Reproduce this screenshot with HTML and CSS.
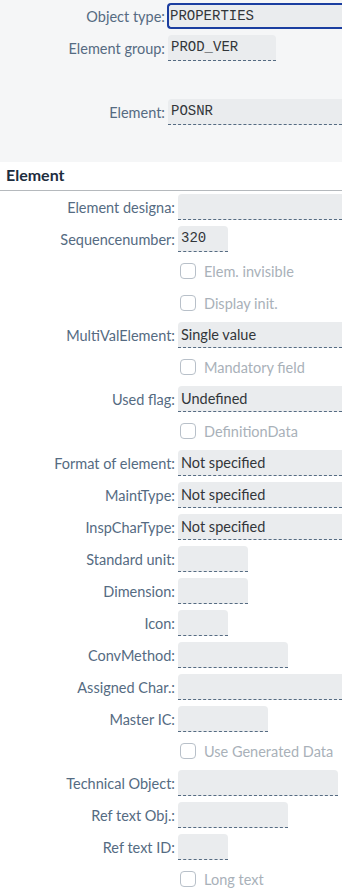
FILE: index.html
```html
<!DOCTYPE html>
<html lang="en">
<head>
  <meta charset="UTF-8" />
  <meta name="viewport" content="width=device-width, initial-scale=1.0"/>
  <title>Element</title>
  <link rel="stylesheet" href="styles.css">
</head>
<body>

  <div class="header-area">
    <div class="row">
      <label>Object type:</label>
      <div class="field full focused mono">PROPERTIES</div>
    </div>
    <div class="row">
      <label>Element group:</label>
      <div class="field w108 mono">PROD_VER</div>
    </div>
    <div class="row"></div>
    <div class="row">
      <label>Element:</label>
      <div class="field full mono">POSNR</div>
    </div>
    <div class="row"></div>
  </div>

  <h2 class="section-title">Element</h2>

  <div class="form">
    <div class="row">
      <label>Element designa:</label>
      <div class="field full"></div>
    </div>
    <div class="row">
      <label>Sequencenumber:</label>
      <div class="field w50 mono">320</div>
    </div>
    <div class="row">
      <label></label>
      <div class="check"><span class="box"></span>Elem. invisible</div>
    </div>
    <div class="row">
      <label></label>
      <div class="check"><span class="box"></span>Display init.</div>
    </div>
    <div class="row">
      <label>MultiValElement:</label>
      <div class="field full">Single value</div>
    </div>
    <div class="row">
      <label></label>
      <div class="check"><span class="box"></span>Mandatory field</div>
    </div>
    <div class="row">
      <label>Used flag:</label>
      <div class="field full">Undefined</div>
    </div>
    <div class="row">
      <label></label>
      <div class="check"><span class="box"></span>DefinitionData</div>
    </div>
    <div class="row">
      <label>Format of element:</label>
      <div class="field full">Not specified</div>
    </div>
    <div class="row">
      <label>MaintType:</label>
      <div class="field full">Not specified</div>
    </div>
    <div class="row">
      <label>InspCharType:</label>
      <div class="field full">Not specified</div>
    </div>
    <div class="row">
      <label>Standard unit:</label>
      <div class="field w70"></div>
    </div>
    <div class="row">
      <label>Dimension:</label>
      <div class="field w70"></div>
    </div>
    <div class="row">
      <label>Icon:</label>
      <div class="field w50"></div>
    </div>
    <div class="row">
      <label>ConvMethod:</label>
      <div class="field w110"></div>
    </div>
    <div class="row">
      <label>Assigned Char.:</label>
      <div class="field full"></div>
    </div>
    <div class="row">
      <label>Master IC:</label>
      <div class="field w90"></div>
    </div>
    <div class="row">
      <label></label>
      <div class="check"><span class="box"></span>Use Generated Data</div>
    </div>
    <div class="row">
      <label>Technical Object:</label>
      <div class="field w160"></div>
    </div>
    <div class="row">
      <label>Ref text Obj.:</label>
      <div class="field w110"></div>
    </div>
    <div class="row">
      <label>Ref text ID:</label>
      <div class="field w50"></div>
    </div>
    <div class="row">
      <label></label>
      <div class="check"><span class="box"></span>Long text</div>
    </div>
  </div>

</body>
</html>
```

FILE: styles.css
```css
body {
  margin: 0;
  font-family: 'Lato', 'Noto Sans', sans-serif;
  font-size: 14.5px;
  color: #32363a;
  background-color: #fff;
  overflow: hidden;
}

.header-area {
  background-color: #f5f6f7;
  padding-bottom: 2px;
}

.row {
  display: grid;
  grid-template-columns: 175px 1fr;
  column-gap: 3px;
  align-items: center;
  height: 32px;
}

.header-area .row {
  grid-template-columns: 165px 1fr;
}

label {
  text-align: right;
  color: #556b82;
  white-space: nowrap;
}

.field {
  box-sizing: border-box;
  height: 26px;
  line-height: 25px;
  padding-left: 3px;
  background-color: #eaecee;
  border-bottom: 1px dashed #556b82;
  border-radius: 4px 4px 0 0;
  white-space: nowrap;
  overflow: hidden;
}

.field.mono {
  font-family: 'Liberation Mono', monospace;
  font-size: 14px;
}

.field.full {
  border-top-right-radius: 0;
}

.field.w50 { width: 50px; }
.field.w70 { width: 70px; }
.field.w90 { width: 90px; }
.field.w108 { width: 108px; }
.field.w110 { width: 110px; }
.field.w160 { width: 160px; }

.field.focused {
  border: 2px solid #1b3ea0;
  border-right: none;
  border-radius: 4px 0 0 4px;
  line-height: 22px;
  padding-left: 1px;
  margin-left: -1px;
}

.section-title {
  margin: 0;
  height: 28px;
  line-height: 25px;
  padding-left: 6px;
  font-size: 16px;
  font-weight: bold;
  color: #1d2d3e;
  border-bottom: 1px solid #b5b9bd;
}

.check {
  display: flex;
  align-items: center;
  gap: 8px;
  padding-left: 2px;
  color: #a9b1b9;
}

.check .box {
  box-sizing: border-box;
  width: 16px;
  height: 16px;
  border: 1px solid #b8c0c9;
  border-radius: 4px;
  background-color: #fff;
}
```
